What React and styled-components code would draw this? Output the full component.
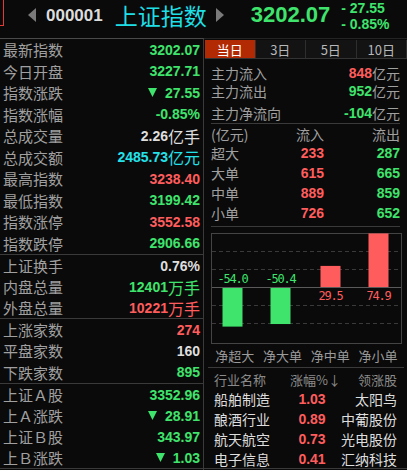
import React from 'react';
import styled, { createGlobalStyle } from 'styled-components';

const GREEN = '#3fe46d';
const RED = '#ff5d5d';
const CYAN = '#24e2ea';
const WHITE = '#dedede';
const GRAY = '#a0a0a0';
const LINE = '#3a3a3a';

const CJK = `"Noto Sans CJK SC", sans-serif`;
const NUM = `"Liberation Sans", Arial, sans-serif`;

const GlobalStyle = createGlobalStyle`
  html, body {
    margin: 0;
    padding: 0;
    background: #0a0a0a;
  }
  body {
    font-family: ${NUM};
  }
  * {
    box-sizing: border-box;
  }
`;

const Screen = styled.div`
  width: 407px;
  height: 470px;
  overflow: hidden;
  background: #0a0a0a;
`;

/* ---------- header ---------- */

const Header = styled.header`
  height: 38px;
  padding-bottom: 8px;
  display: flex;
  align-items: center;
`;

const RedTab = styled.div`
  align-self: flex-start;
  width: 4px;
  height: 26px;
  border-right: 1px solid #e53935;
  border-bottom: 1px solid #e53935;
  margin-right: 24px;
`;

const ArrowSvg = styled.svg`
  flex: none;
  margin-left: ${p => p.$ml || 0}px;
`;

const Code = styled.span`
  margin-left: 10px;
  font: bold 17px/1 ${NUM};
  color: #dcdcdc;
`;

const IndexName = styled.span`
  margin-left: 12px;
  font: 23px/1 ${CJK};
  color: #1fdfe6;
`;

const Price = styled.span`
  margin-left: 27px;
  font: bold 22px/1 ${NUM};
  color: ${GREEN};
`;

const ChangeBox = styled.div`
  align-self: flex-start;
  margin-left: 11px;
  display: flex;
  flex-direction: column;
  font: bold 14px/16px ${NUM};
  color: ${GREEN};
  white-space: pre;
`;

/* ---------- body ---------- */

const Body = styled.div`
  display: flex;
  height: 432px;
`;

const LeftPanel = styled.div`
  flex: none;
  width: 204px;
  border-top: 1px solid #4a4a4a;
  border-right: 1px solid ${LINE};
  display: flex;
  flex-direction: column;
`;

const Section = styled.div`
  flex: none;
  height: ${p => p.$h}px;
  border-bottom: 1px solid ${LINE};
  display: flex;
  flex-direction: column;
`;

const StatRow = styled.div`
  flex: 1;
  display: flex;
  align-items: center;
  justify-content: space-between;
  padding: 0 3px 0 3px;
`;

const Label = styled.span`
  font: ${p => p.$size || 15}px/1 ${CJK};
  color: ${p => p.$c || GRAY};
  text-align: ${p => p.$align || 'inherit'};
  white-space: nowrap;
`;

const ValueBox = styled.div`
  display: flex;
  align-items: center;
`;

const Num = styled.span`
  font: bold 14px/1 ${NUM};
  color: ${p => p.$c};
`;

const Unit = styled.span`
  font: ${p => p.$size || 16}px/1 ${CJK};
  color: ${p => p.$c};
`;

const DownMark = styled.svg`
  flex: none;
  margin-right: 8px;
`;

/* ---------- right panel ---------- */

const RightPanel = styled.div`
  flex: none;
  width: 203px;
  height: 431px;
  overflow: hidden;
  border-top: 1px solid #242424;
  border-bottom: 1px solid ${LINE};
  display: flex;
  flex-direction: column;
`;

const Tabs = styled.div`
  flex: none;
  display: flex;
  height: 19px;
  margin: 1px 0 0 1px;
  border-bottom: 1px solid #333;
`;

const Tab = styled.div`
  flex: 1;
  display: flex;
  align-items: center;
  justify-content: center;
  border-right: 1px solid #2e2e2e;
  background: ${p => (p.$active ? '#b12a03' : '#131313')};
  color: ${p => (p.$active ? '#ffffff' : '#b8b8b8')};
  font: 13px/1 ${CJK};
`;

const FlowBlock = styled.div`
  flex: none;
  padding: 4px 7px 0;
`;

const FlowRow = styled.div`
  height: ${p => p.$h}px;
  padding-top: ${p => p.$pt || 0}px;
  display: flex;
  align-items: center;
  justify-content: space-between;
`;

const DetailRow = styled.div`
  height: ${p => p.$h || 20}px;
  display: grid;
  grid-template-columns: 1fr 44px 76px;
  align-items: center;
  text-align: right;
`;

const Rule = styled.div`
  flex: none;
  height: 1px;
  background: ${LINE};
  margin: ${p => p.$m || '0'};
`;

const ChartWrap = styled.div`
  flex: none;
  width: 191px;
  margin: 6px 0 0 7px;

  svg {
    display: block;
  }
`;

const ChartLabels = styled.div`
  height: 23px;
  display: grid;
  grid-template-columns: repeat(4, 1fr);
  align-items: center;
  justify-items: center;
`;

const Table = styled.div`
  flex: 1;
  min-height: 0;
  display: grid;
  grid-template-columns: 76px 44px 1fr;
  grid-auto-rows: 20px;
  align-items: center;
  padding: 1px 10px 0;
`;

const Cell = styled.span`
  text-align: ${p => p.$align || 'left'};
  white-space: nowrap;
  font: ${p => (p.$num ? `bold 14px/1 ${NUM}` : `${p.$head ? 13 : 14}px/1 ${CJK}`)};
  color: ${p => p.$c};
`;

/* ---------- data ---------- */

const sections = [
  {
    h: 216,
    rows: [
      { label: '最新指数', value: '3202.07', c: GREEN },
      { label: '今日开盘', value: '3227.71', c: GREEN },
      { label: '指数涨跌', value: '27.55', c: GREEN, down: true },
      { label: '指数涨幅', value: '-0.85%', c: GREEN },
      { label: '总成交量', value: '2.26', unit: '亿手', c: WHITE },
      { label: '总成交额', value: '2485.73', unit: '亿元', c: CYAN },
      { label: '最高指数', value: '3238.40', c: RED },
      { label: '最低指数', value: '3199.42', c: GREEN },
      { label: '指数涨停', value: '3552.58', c: RED },
      { label: '指数跌停', value: '2906.66', c: GREEN },
    ],
  },
  {
    h: 64,
    rows: [
      { label: '上证换手', value: '0.76%', c: WHITE },
      { label: '内盘总量', value: '12401', unit: '万手', c: GREEN },
      { label: '外盘总量', value: '10221', unit: '万手', c: RED },
    ],
  },
  {
    h: 65,
    rows: [
      { label: '上涨家数', value: '274', c: RED },
      { label: '平盘家数', value: '160', c: WHITE },
      { label: '下跌家数', value: '895', c: GREEN },
    ],
  },
  {
    h: 85,
    rows: [
      { label: '上证Ａ股', value: '3352.96', c: GREEN },
      { label: '上Ａ涨跌', value: '28.91', c: GREEN, down: true },
      { label: '上证Ｂ股', value: '343.97', c: GREEN },
      { label: '上Ｂ涨跌', value: '1.03', c: GREEN, down: true },
    ],
  },
];

const mainFlows = [
  { label: '主力流入', value: '848', c: RED, h: 19 },
  { label: '主力流出', value: '952', c: GREEN, h: 18 },
  { label: '主力净流向', value: '-104', c: GREEN, h: 23, pt: 2 },
];

const orders = [
  { label: '超大', inflow: '233', outflow: '287' },
  { label: '大单', inflow: '615', outflow: '665' },
  { label: '中单', inflow: '889', outflow: '859' },
  { label: '小单', inflow: '726', outflow: '652' },
];

const netFlows = [
  { label: '净超大', value: -54.0, x: 11.5 },
  { label: '净大单', value: -50.4, x: 59.5 },
  { label: '净中单', value: 29.5, x: 109.5 },
  { label: '净小单', value: 74.9, x: 157.5 },
];

const sectors = [
  { name: '船舶制造', pct: '1.03', lead: '太阳鸟' },
  { name: '酿酒行业', pct: '0.89', lead: '中葡股份' },
  { name: '航天航空', pct: '0.73', lead: '光电股份' },
  { name: '电子信息', pct: '0.41', lead: '汇纳科技' },
];

/* ---------- parts ---------- */

function Arrow({ dir, ml }) {
  return (
    <ArrowSvg $ml={ml} width="8" height="14" viewBox="0 0 8 14">
      <polygon points={dir === 'left' ? '8,0 8,14 0,7' : '0,0 0,14 8,7'} fill="#7a7a7a" />
    </ArrowSvg>
  );
}

function StatValue({ row }) {
  return (
    <ValueBox>
      {row.down && (
        <DownMark width="9" height="9" viewBox="0 0 9 9">
          <polygon points="0,0 9,0 4.5,9" fill={row.c} />
        </DownMark>
      )}
      <Num $c={row.c}>{row.value}</Num>
      {row.unit && <Unit $c={row.c}>{row.unit}</Unit>}
    </ValueBox>
  );
}

function NetFlowChart() {
  const axis = 54;
  const k = 0.715;
  return (
    <svg width="191" height="111" viewBox="0 0 191 111">
      <rect x="0.5" y="0.5" width="190" height="110" fill="none" stroke="#444" />
      {[18, 36, 72, 90].map(y => (
        <line key={y} x1="1" x2="190" y1={y + 0.5} y2={y + 0.5} stroke="#3a3a3a" strokeDasharray="4 3" />
      ))}
      <line x1="1" x2="190" y1={axis + 0.5} y2={axis + 0.5} stroke="#5a5a5a" />
      {netFlows.map(f => {
        const h = Math.abs(f.value) * k;
        const up = f.value > 0;
        const color = up ? RED : GREEN;
        return (
          <g key={f.label}>
            <rect x={f.x} y={up ? axis - h : axis + 1} width="20" height={h} fill={color} />
            <text
              x={f.x + 10}
              y={up ? 67 : 50}
              textAnchor="middle"
              fill={color}
              fontFamily='"DejaVu Sans Mono", monospace'
              fontSize="12"
              letterSpacing="-1.2"
            >
              {f.value.toFixed(1)}
            </text>
          </g>
        );
      })}
    </svg>
  );
}

export default function App() {
  return (
    <Screen>
      <GlobalStyle />
      <Header>
        <RedTab />
        <Arrow dir="left" />
        <Code>000001</Code>
        <IndexName>上证指数</IndexName>
        <Arrow dir="right" ml={9} />
        <Price>3202.07</Price>
        <ChangeBox>
          <span>- 27.55</span>
          <span>- 0.85%</span>
        </ChangeBox>
      </Header>

      <Body>
        <LeftPanel>
          {sections.map((s, i) => (
            <Section key={i} $h={s.h}>
              {s.rows.map(r => (
                <StatRow key={r.label}>
                  <Label>{r.label}</Label>
                  <StatValue row={r} />
                </StatRow>
              ))}
            </Section>
          ))}
        </LeftPanel>

        <RightPanel>
          <Tabs>
            <Tab $active>当日</Tab>
            <Tab>3日</Tab>
            <Tab>5日</Tab>
            <Tab>10日</Tab>
          </Tabs>

          <FlowBlock>
            {mainFlows.map(f => (
              <FlowRow key={f.label} $h={f.h} $pt={f.pt}>
                <Label $size={14}>{f.label}</Label>
                <ValueBox>
                  <Num $c={f.c}>{f.value}</Num>
                  <Unit $size={14} $c={GRAY}>亿元</Unit>
                </ValueBox>
              </FlowRow>
            ))}
            <Rule />
            <DetailRow $h={19}>
              <Label $size={14} $align="left">(亿元)</Label>
              <Label $size={14}>流入</Label>
              <Label $size={14}>流出</Label>
            </DetailRow>
            {orders.map(o => (
              <DetailRow key={o.label}>
                <Label $size={14} $align="left">{o.label}</Label>
                <Num $c={RED}>{o.inflow}</Num>
                <Num $c={GREEN}>{o.outflow}</Num>
              </DetailRow>
            ))}
            <Rule $m="3px 0 0" />
          </FlowBlock>

          <ChartWrap>
            <NetFlowChart />
            <ChartLabels>
              {netFlows.map(f => (
                <Label key={f.label} $size={13} $c="#9a9a9a">{f.label}</Label>
              ))}
            </ChartLabels>
          </ChartWrap>

          <Rule $m="0 3px 0 4px" />

          <Table>
            <Cell $head $c="#8a8a8a">行业名称</Cell>
            <Cell $head $c="#8a8a8a" $align="center">涨幅%↓</Cell>
            <Cell $head $c="#8a8a8a" $align="right">领涨股</Cell>
            {sectors.map(s => (
              <React.Fragment key={s.name}>
                <Cell $c={WHITE}>{s.name}</Cell>
                <Cell $num $c={RED} $align="center">{s.pct}</Cell>
                <Cell $c={WHITE} $align="right">{s.lead}</Cell>
              </React.Fragment>
            ))}
          </Table>
        </RightPanel>
      </Body>
    </Screen>
  );
}
